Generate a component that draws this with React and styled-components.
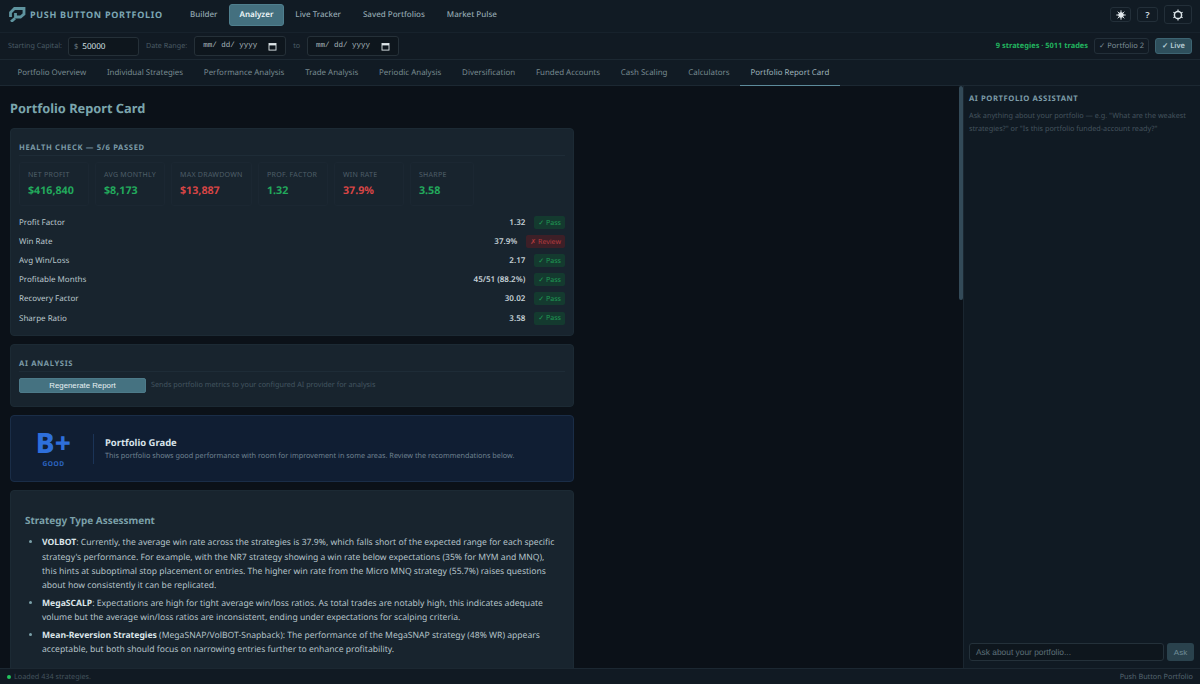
import React from 'react';
import styled, { createGlobalStyle } from 'styled-components';

const Global = createGlobalStyle`
  html, body { margin: 0; padding: 0; height: 100%; overflow: hidden; background: #0b1118; }
  * { box-sizing: border-box; }
  body { font-family: "Noto Sans", "Open Sans", sans-serif; text-rendering: geometricPrecision; }
`;
const Page = styled.div`width:1200px;height:684px;display:flex;flex-direction:column;overflow:hidden;color:#c9d6dc;`;
const Header = styled.header`height:33px;flex:none;display:flex;align-items:center;padding:0 8px 0 9px;background:#111b24;border-bottom:1px solid #17222c;`;
const Brand = styled.div`display:flex;align-items:center;gap:4px;width:170px;flex:none;margin-top:-3px;`;
const BrandName = styled.span`font-size:9px;font-weight:700;letter-spacing:.7px;color:#7ba6b3;white-space:nowrap;`;
const MainNav = styled.nav`display:flex;gap:0;align-items:center;margin-top:-3px;`;
const NavItem = styled.span`font-size:8px;height:22px;display:flex;align-items:center;padding:0 10px;border-radius:3px;color:${p=>p.$active?'#eef6f8':'#93a7b0'};background:${p=>p.$active?'#44707f':'transparent'};border:1px solid ${p=>p.$active?'#4f7f8e':'transparent'};font-weight:${p=>p.$active?600:500};`;
const HeaderRight = styled.div`margin-left:auto;display:flex;align-items:center;gap:6px;margin-top:-3px;`;
const IconBtn = styled.button`display:flex;align-items:center;justify-content:center;padding:0;width:${p=>p.$big?28:21}px;height:${p=>p.$big?19:15}px;background:#111b24;border:1px solid #232f39;border-radius:3px;color:#d5dfe3;font-size:9.5px;font-weight:600;font-family:inherit;`;
const Toolbar = styled.div`height:27px;flex:none;display:flex;align-items:center;padding:0 8px;background:#111a23;border-bottom:1px solid #1c2832;`;
const Faint = styled.span`font-size:7.2px;color:#4a5a65;white-space:nowrap;margin:${p=>p.$m||0};`;
const CapitalBox = styled.div`width:71px;height:19px;display:flex;align-items:center;gap:4px;padding:0 5px;background:#0e161d;border:1px solid #253038;border-radius:3px;margin-left:6px;`;
const Dollar = styled.span`font-size:7.5px;color:#66767f;margin-top:1px;`;
const CapitalValue = styled.span`font-size:8.1px;color:#d8e3e8;`;
const DateBox = styled.div`height:20px;width:92px;display:flex;align-items:center;justify-content:space-between;padding:0 8px;background:#0e161d;border:1px solid #253038;border-radius:3px;font-family:"Liberation Mono",monospace;font-size:7.5px;color:#aab8be;`;
const Summary = styled.span`margin-left:auto;font-size:7.45px;font-weight:700;color:#22b45f;white-space:nowrap;`;
const Toggle = styled.span`height:16px;display:flex;align-items:center;justify-content:center;width:${p=>p.$w}px;font-size:7.5px;border-radius:3px;white-space:nowrap;margin-left:6px;color:${p=>p.$on?'#b6ccd4':'#7d8e97'};background:${p=>p.$on?'#2e4f5c':'transparent'};border:1px solid ${p=>p.$on?'#3d6472':'#232f39'};font-weight:${p=>p.$on?600:400};`;
const Tabs = styled.div`height:26px;flex:none;display:flex;padding-left:7px;background:#111b24;border-bottom:1px solid #1c2832;`;
const Tab = styled.span`height:26px;display:flex;align-items:center;padding:0 10.4px;font-size:7.93px;white-space:nowrap;color:${p=>p.$active?'#9eb2ba':'#77898f'};border-bottom:1.5px solid ${p=>p.$active?'#5d8b9b':'transparent'};`;
const Body = styled.div`flex:1;min-height:0;display:flex;background:#0b1118;`;
const Main = styled.main`flex:1;min-width:0;position:relative;padding:13px 0 0 10px;overflow:hidden;`;
const Thumb = styled.div`position:absolute;top:0;right:0;width:4px;height:214px;background:#334a58;border-radius:2px;`;
const Title = styled.h1`margin:0 0 11px;font-size:12.8px;line-height:18px;font-weight:700;color:#7ba6ad;`;
const Card = styled.section`width:564px;background:#18242e;border:1px solid #1c2a34;border-radius:4px;padding:0 8px;margin-bottom:8px;`;
const CardHead = styled.h2`margin:0;box-sizing:content-box;height:13px;padding-top:13px;line-height:12px;font-size:7.6px;font-weight:700;letter-spacing:.65px;color:#7b9aa6;border-bottom:1px solid #1e2c37;`;
const Metrics = styled.div`display:flex;gap:6px;margin:6px 0 7px;`;
const Metric = styled.div`width:${p=>p.$w}px;height:44px;flex:none;padding:7px 8px 0;border:1px solid #1b2732;border-radius:3px;`;
const MetricLabel = styled.div`font-size:7.05px;line-height:10px;letter-spacing:.25px;color:#4f5f69;white-space:nowrap;`;
const MetricValue = styled.div`font-size:10.7px;line-height:14px;margin-top:4px;font-weight:700;color:${p=>p.$bad?'#d64545':'#22a95c'};`;
const Rows = styled.div`padding-bottom:7.6px;`;
const Row = styled.div`height:19.1px;display:flex;align-items:center;font-size:8px;color:#b9c6cc;`;
const RowValue = styled.span`margin-left:auto;font-weight:600;color:#c6d1d6;`;
const Badge = styled.span`margin-left:9px;height:13px;display:flex;align-items:center;padding:0 4px;font-size:7.05px;border-radius:2px;color:${p=>p.$bad?'#b53b3e':'#1f9a55'};background:${p=>p.$bad?'#3d1f27':'#143a2f'};`;
const Action = styled.div`display:flex;align-items:center;gap:5px;height:16px;margin:5px 0 13px;`;
const Regen = styled.button`width:127px;height:15px;padding:0;border-radius:2px;border:1px solid #4d7a89;background:#457281;color:#e8f1f3;font-family:"Liberation Sans",Arial,sans-serif;font-size:7.8px;`;
const Hint = styled.span`font-size:7.25px;color:#435560;`;
const Grade = styled.section`width:564px;height:67px;display:flex;align-items:center;padding-left:24px;background:#101e33;border:1px solid #1a2d47;border-radius:4px;margin-bottom:8px;`;
const GradeCol = styled.div`width:37px;flex:none;text-align:center;`;
const GradeLetter = styled.div`font-size:28px;line-height:26px;font-weight:800;color:#2e6fdb;white-space:nowrap;letter-spacing:.2px;`;
const GradeWord = styled.div`font-size:6.6px;line-height:9px;margin-top:3px;font-weight:700;letter-spacing:.5px;color:#2c65c2;`;
const GradeText = styled.div`margin-left:21px;padding-left:11px;border-left:1px solid #1b3457;height:30px;`;
const GradeTitle = styled.div`font-size:9.45px;line-height:13px;font-weight:700;color:#d8e3ea;margin-top:2px;`;
const GradeDesc = styled.div`font-size:7.28px;line-height:11px;margin-top:2px;color:#6f8291;white-space:nowrap;`;
const Report = styled.section`width:564px;height:200px;background:#18242e;border:1px solid #1c2a34;border-radius:4px;padding:22px 14px 0;`;
const ReportHead = styled.h3`margin:0 0 8px;font-size:9.95px;line-height:14px;font-weight:700;color:#7ba0a9;`;
const List = styled.ul`margin:0;padding-left:17px;li::marker{color:#7ba0a9;}`;
const Item = styled.li`font-size:8.6px;line-height:14.4px;margin-top:3px;color:#b5c3c9;strong{color:#dbe5e9;font-weight:700;}`;
const Side = styled.aside`width:237px;flex:none;display:flex;flex-direction:column;padding:8px 6px 7px 5px;background:#101a23;border-left:1px solid #1a2630;`;
const SideHead = styled.h4`margin:0;font-size:7.7px;line-height:11px;letter-spacing:.55px;font-weight:700;color:#7b9aa6;`;
const SideText = styled.p`margin:5px 0 0;font-size:7.25px;line-height:12.5px;color:#44535d;`;
const Ask = styled.div`margin-top:auto;display:flex;gap:3px;`;
const AskInput = styled.div`flex:1;height:18px;display:flex;align-items:center;padding:0 6px;background:#0e161d;border:1px solid #24313a;border-radius:3px;font-family:"Liberation Sans",sans-serif;font-size:8.4px;color:#5d6f78;`;
const AskBtn = styled.button`width:27px;height:18px;padding:0;border:none;border-radius:3px;background:#2a424d;color:#6f8c97;font-family:"Liberation Sans",sans-serif;font-size:8px;`;
const Status = styled.footer`height:16px;flex:none;display:flex;align-items:center;padding:0 7px;background:#111a23;border-top:1px solid #1c2832;font-size:7.25px;color:#44535d;`;
const Dot = styled.i`width:4px;height:4px;border-radius:50%;background:#22c55e;margin-right:3px;`;
const StatusRight = styled.span`margin-left:auto;color:#53646e;`;

const Logo = () => (
  <svg width="17" height="15" viewBox="0 0 17 15" fill="none" stroke="#5f949f" strokeWidth="2.8">
    <path d="M1.5 10 L1.5 5.5 L5.5 1.5 L15 1.5 L15 7 L11.5 10 L6.5 10 L6.5 6" />
    <path d="M2 14.8 L6 11.2" />
  </svg>
);
const Sun = () => (
  <svg width="10" height="10" viewBox="0 0 10 10" stroke="#e3eaee" strokeWidth="1" fill="#e3eaee">
    <circle cx="5" cy="5" r="2.4" />
    <path d="M5 0.3V2M5 8V9.7M0.3 5H2M8 5H9.7M1.7 1.7L2.9 2.9M7.1 7.1L8.3 8.3M8.3 1.7L7.1 2.9M2.9 7.1L1.7 8.3" />
  </svg>
);
const Gear = () => (
  <svg width="12" height="12" viewBox="0 0 12 12" fill="none" stroke="#dce5e9" strokeWidth="1.5">
    <circle cx="6" cy="6" r="3.6" />
    <path d="M6 0.4V2.2M6 9.8V11.6M1.4 3.3L2.8 4M9.2 8L10.6 8.7M10.6 3.3L9.2 4M2.8 8L1.4 8.7" strokeWidth="1.2" />
  </svg>
);
const Cal = () => (
  <svg width="9" height="9" viewBox="0 0 9 9" fill="none" stroke="#dfe7ea">
    <rect x="1" y="1.5" width="7" height="6.6" strokeWidth=".9" />
    <path d="M1 2.6H8" strokeWidth="1.6" />
  </svg>
);
const metrics = [
  ['NET PROFIT', '$416,840', 70, false],
  ['AVG MONTHLY', '$8,173', 70, false],
  ['MAX DRAWDOWN', '$13,887', 81, true],
  ['PROF. FACTOR', '1.32', 70, false],
  ['WIN RATE', '37.9%', 70, true],
  ['SHARPE', '3.58', 64, false],
];
const rows = [
  ['Profit Factor', '1.32'],
  ['Win Rate', '37.9%', true],
  ['Avg Win/Loss', '2.17'],
  ['Profitable Months', '45/51 (88.2%)'],
  ['Recovery Factor', '30.02'],
  ['Sharpe Ratio', '3.58'],
];
const navs = [['Builder', 0], ['Analyzer', 1], ['Live Tracker', 0], ['Saved Portfolios', 0], ['Market Pulse', 0]];
const tabs = ['Portfolio Overview','Individual Strategies','Performance Analysis','Trade Analysis','Periodic Analysis','Diversification','Funded Accounts','Cash Scaling','Calculators'];

export default function App() {
  return (
    <Page>
      <Global />
      <Header>
        <Brand><Logo /><BrandName>PUSH BUTTON PORTFOLIO</BrandName></Brand>
        <MainNav>{navs.map(([n, a]) => <NavItem key={n} $active={!!a}>{n}</NavItem>)}</MainNav>
        <HeaderRight>
          <IconBtn><Sun /></IconBtn>
          <IconBtn>?</IconBtn>
          <IconBtn $big><Gear /></IconBtn>
        </HeaderRight>
      </Header>
      <Toolbar>
        <Faint>Starting Capital:</Faint>
        <CapitalBox><Dollar>$</Dollar><CapitalValue>50000</CapitalValue></CapitalBox>
        <Faint $m="0 7px 0 7px">Date Range:</Faint>
        <DateBox><span>mm/ dd/ yyyy</span><Cal /></DateBox>
        <Faint $m="0 7px">to</Faint>
        <DateBox><span>mm/ dd/ yyyy</span><Cal /></DateBox>
        <Summary>9 strategies · 5011 trades</Summary>
        <Toggle $w={55}>✓ Portfolio 2</Toggle>
        <Toggle $w={37} $on>✓ Live</Toggle>
      </Toolbar>
      <Tabs>
        {tabs.map(t => <Tab key={t}>{t}</Tab>)}
        <Tab $active>Portfolio Report Card</Tab>
      </Tabs>
      <Body>
        <Main>
          <Thumb />
          <Title>Portfolio Report Card</Title>
          <Card>
            <CardHead>HEALTH CHECK — 5/6 PASSED</CardHead>
            <Metrics>
              {metrics.map(([l, v, w, b]) => (
                <Metric key={l} $w={w}><MetricLabel>{l}</MetricLabel><MetricValue $bad={b}>{v}</MetricValue></Metric>
              ))}
            </Metrics>
            <Rows>
              {rows.map(([l, v, b]) => (
                <Row key={l}><span>{l}</span><RowValue>{v}</RowValue><Badge $bad={b}>{b ? '✗ Review' : '✓ Pass'}</Badge></Row>
              ))}
            </Rows>
          </Card>
          <Card>
            <CardHead>AI ANALYSIS</CardHead>
            <Action>
              <Regen>Regenerate Report</Regen>
              <Hint>Sends portfolio metrics to your configured AI provider for analysis</Hint>
            </Action>
          </Card>
          <Grade>
            <GradeCol><GradeLetter>B+</GradeLetter><GradeWord>GOOD</GradeWord></GradeCol>
            <GradeText>
              <GradeTitle>Portfolio Grade</GradeTitle>
              <GradeDesc>This portfolio shows good performance with room for improvement in some areas. Review the recommendations below.</GradeDesc>
            </GradeText>
          </Grade>
          <Report>
            <ReportHead>Strategy Type Assessment</ReportHead>
            <List>
              <Item><strong>VOLBOT</strong>: Currently, the average win rate across the strategies is 37.9%, which falls short of the expected range for each specific strategy's performance. For example, with the NR7 strategy showing a win rate below expectations (35% for MYM and MNQ), this hints at suboptimal stop placement or entries. The higher win rate from the Micro MNQ strategy (55.7%) raises questions about how consistently it can be replicated.</Item>
              <Item><strong>MegaSCALP</strong>: Expectations are high for tight average win/loss ratios. As total trades are notably high, this indicates adequate volume but the average win/loss ratios are inconsistent, ending under expectations for scalping criteria.</Item>
              <Item><strong>Mean-Reversion Strategies</strong> (MegaSNAP/VolBOT-Snapback): The performance of the MegaSNAP strategy (48% WR) appears acceptable, but both should focus on narrowing entries further to enhance profitability.</Item>
            </List>
          </Report>
        </Main>
        <Side>
          <SideHead>AI PORTFOLIO ASSISTANT</SideHead>
          <SideText>Ask anything about your portfolio — e.g. "What are the weakest strategies?" or "Is this portfolio funded-account ready?"</SideText>
          <Ask><AskInput>Ask about your portfolio...</AskInput><AskBtn>Ask</AskBtn></Ask>
        </Side>
      </Body>
      <Status><Dot />Loaded 434 strategies.<StatusRight>Push Button Portfolio</StatusRight></Status>
    </Page>
  );
}
